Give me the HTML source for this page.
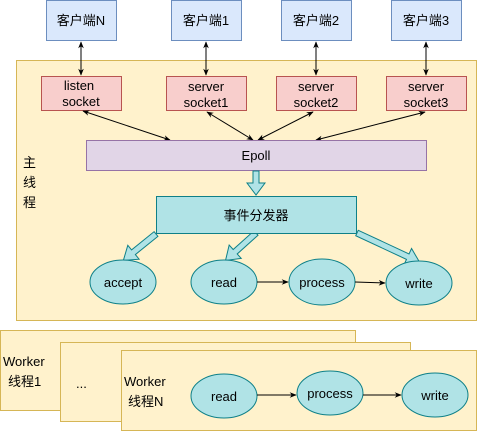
<!DOCTYPE html>
<html><head><meta charset="utf-8"><style>
html,body{margin:0;padding:0;background:#fff;}
svg{display:block;}
text{font-family:"Liberation Sans","Noto Sans CJK SC",sans-serif;font-size:13px;fill:#000;}
</style></head><body>
<svg width="477" height="431" viewBox="0 0 477 431" xmlns="http://www.w3.org/2000/svg">
<defs>
<marker id="ah" viewBox="0 0 10 10" refX="9" refY="5" markerWidth="7" markerHeight="7" orient="auto-start-reverse"><path d="M0,1 L10,5 L0,9 L3,5 Z" fill="#000"/></marker>
</defs>
<g fill="#dae8fc" stroke="#6c8ebf">
<rect x="46.5" y="0.5" width="70" height="40"/>
<rect x="171.5" y="0.5" width="70" height="40"/>
<rect x="281.5" y="0.5" width="70" height="40"/>
<rect x="391.5" y="0.5" width="70" height="40"/>
</g>
<g text-anchor="middle">
<text x="81" y="25">客户端N</text>
<text x="206" y="25">客户端1</text>
<text x="316" y="25">客户端2</text>
<text x="426" y="25">客户端3</text>
</g>
<rect x="16.5" y="60.5" width="460" height="260" fill="#fff2cc" stroke="#d6b656"/>
<g fill="#f8cecc" stroke="#b85450">
<rect x="41.5" y="76.5" width="80" height="34"/>
<rect x="166.5" y="76.5" width="80" height="34"/>
<rect x="276.5" y="76.5" width="80" height="34"/>
<rect x="386.5" y="76.5" width="80" height="34"/>
</g>
<g text-anchor="middle">
<text x="79" y="90">listen</text><text x="81" y="106">socket</text>
<text x="206" y="91">server</text><text x="206" y="107">socket1</text>
<text x="316" y="91">server</text><text x="316" y="107">socket2</text>
<text x="426" y="91">server</text><text x="426" y="107">socket3</text>
</g>
<g stroke="#000" stroke-width="1" marker-start="url(#ah)" marker-end="url(#ah)">
<line x1="81" y1="42" x2="81" y2="75"/>
<line x1="206" y1="42" x2="206" y2="75"/>
<line x1="316" y1="42" x2="316" y2="75"/>
<line x1="426" y1="42" x2="426" y2="75"/>
<line x1="83" y1="111" x2="170" y2="140"/>
<line x1="207" y1="112" x2="253" y2="140"/>
<line x1="313" y1="112" x2="258" y2="140"/>
<line x1="425" y1="112" x2="316" y2="140"/>
</g>
<rect x="86.5" y="140.5" width="340" height="30" fill="#e1d5e7" stroke="#9673a6"/>
<text x="256" y="160" text-anchor="middle">Epoll</text>
<g style="font-size:15px"><text x="23" y="167">主</text><text x="23" y="187">线</text><text x="23" y="207">程</text></g>
<g fill="#b0e3e6" stroke="#0e8088" stroke-width="1">
<polygon transform="translate(256,171) rotate(90)" points="0,-3 12,-3 12,-9 24,0 12,9 12,3 0,3"/>
<polygon transform="translate(156,234) rotate(141)" points="0,-3 29,-3 29,-9 42,0 29,9 29,3 0,3"/>
<polygon transform="translate(256,233) rotate(138)" points="0,-3 28,-3 28,-9 41,0 28,9 28,3 0,3"/>
<polygon transform="translate(357,233) rotate(25)" points="0,-3 56,-3 56,-9 69,0 56,9 56,3 0,3"/>
</g>
<rect x="156.5" y="196.5" width="200" height="37" fill="#b0e3e6" stroke="#0e8088"/>
<text x="256" y="220" text-anchor="middle">事件分发器</text>
<g fill="#b0e3e6" stroke="#0e8088">
<ellipse cx="123" cy="282" rx="33" ry="22"/>
<ellipse cx="224" cy="282" rx="33" ry="22"/>
<ellipse cx="322" cy="282" rx="33" ry="23"/>
<ellipse cx="419" cy="283" rx="33" ry="22"/>
</g>
<g text-anchor="middle">
<text x="123" y="287">accept</text>
<text x="224" y="287">read</text>
<text x="322" y="287">process</text>
<text x="419" y="288">write</text>
</g>
<g stroke="#000" marker-end="url(#ah)">
<line x1="257" y1="282" x2="288" y2="282"/>
<line x1="355" y1="282" x2="385" y2="283"/>
</g>
<g fill="#fff2cc" stroke="#d6b656">
<rect x="0.5" y="330.5" width="355" height="80"/>
<rect x="60.5" y="342.5" width="350" height="79"/>
<rect x="121.5" y="350.5" width="355" height="80"/>
</g>
<g style="font-size:14px">
<text x="3" y="366">Worker</text>
<text x="8" y="386">线程1</text>
<text x="124" y="386">Worker</text>
<text x="128" y="406">线程N</text>
</g>
<text x="76" y="388">...</text>
<g fill="#b0e3e6" stroke="#0e8088">
<ellipse cx="224" cy="396" rx="33" ry="22"/>
<ellipse cx="330" cy="393" rx="33" ry="22"/>
<ellipse cx="435" cy="395" rx="33" ry="22"/>
</g>
<g text-anchor="middle">
<text x="224" y="401">read</text>
<text x="330" y="398">process</text>
<text x="435" y="400">write</text>
</g>
<g stroke="#000" marker-end="url(#ah)">
<line x1="257" y1="395" x2="296" y2="395"/>
<line x1="363" y1="395" x2="401" y2="395"/>
</g>
</svg>
</body></html>
